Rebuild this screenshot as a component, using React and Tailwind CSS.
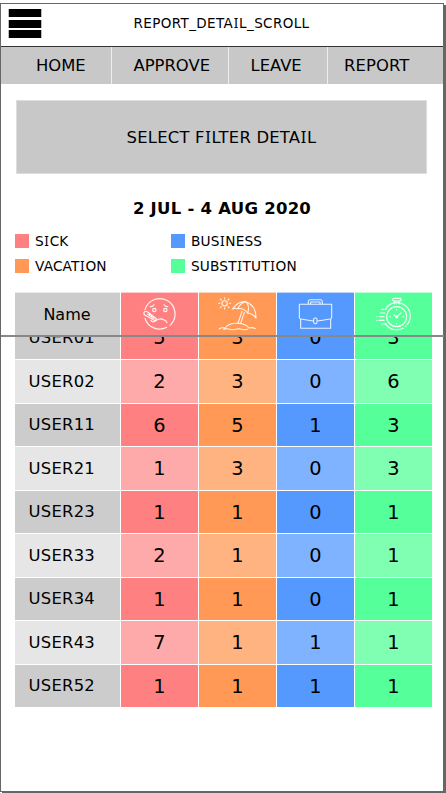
import React from "react";

function T({ children }) {
  return String(children).split(/(I)/).map((p, i) =>
    p === "I" ? <span key={i} className="px-[0.5px] font-['Noto_Sans',sans-serif] leading-none">I</span> : p
  );
}

function SickIcon() {
  return (
    <svg viewBox="18 24 234 129" className="block h-[43px] w-[78px]" fill="none" stroke="#fff" strokeOpacity=".9" strokeWidth="3.6" strokeLinecap="round" strokeLinejoin="round">
      <path d="M90 74A46 46 0 1 1 168 118M90 100A46 46 0 0 0 155 127" />
      <path d="M165 121l.5-.5" />
      <circle cx="118" cy="75" r="5" /><circle cx="151" cy="75" r="5" />
      <path d="M106 65q8 0 11-6M147 59q3 6 11 6" />
      <path d="M91 79q-7 4-3 10l30 17q6 1 6-5l-26-20q-4-3-7-2ZM98 88l18 12" />
      <path d="M105 86l-2 4M111 91l-2 4" />
      <path d="M108 106q4 7 12 3q12-12 26-5q8 3 10 9" />
    </svg>
  );
}

function VacationIcon() {
  return (
    <svg viewBox="12 24 234 129" className="block h-[43px] w-[78px]" fill="none" stroke="#fff" strokeOpacity=".9" strokeWidth="3.2" strokeLinecap="round" strokeLinejoin="round">
      <circle cx="89" cy="55" r="8" />
      <path d="M89 38v4M89 68v4M71 55h4M103 55h4M76 42l3 3M99 65l3 3M76 68l3-3M99 45l3-3" />
      <path d="M112 72Q128 49 152 50Q184 60 183 100Q174 85 158 84Q146 69 129 71Q120 68 112 72Z" />
      <path d="M152 50Q134 55 129 71M152 50Q165 62 158 84" />
      <path d="M141 79L129 114M148 82L137 115" />
      <path d="M73 132q6-6 17-3q9-12 29-14q31-2 43 14q11-3 19 2M86 133q9-4 18 0q9 2 18 0q9-4 18 0q9 2 18 0" />
    </svg>
  );
}

function BusinessIcon() {
  return (
    <svg viewBox="15 24 234 129" className="block h-[43px] w-[78px]" fill="none" stroke="#fff" strokeOpacity=".88" strokeWidth="3.2" strokeLinejoin="round">
      <path d="M109 58V50q0-6 6-6h30q6 0 6 6v8M116 58v-7h28v7" />
      <path d="M82 58h97v39q0 4-4 5l-39 6M82 58v39q0 4 4 5l38 6" />
      <path d="M86 102v28h90v-28" />
      <rect x="125" y="99" width="10" height="17" rx="4" />
    </svg>
  );
}

function SubstitutionIcon() {
  return (
    <svg viewBox="15 24 234 129" className="block h-[43px] w-[78px]" fill="none" stroke="#fff" strokeOpacity=".92" strokeWidth="3.6" strokeLinecap="round" strokeLinejoin="round">
      <rect x="128" y="40" width="25" height="8" rx="3" />
      <path d="M134 48v8M147 48v8" />
      <path d="M106 73A40 40 0 1 1 171 119M106 116A40 40 0 0 0 159 130M167 124l.5-.5" />
      <circle cx="140" cy="95" r="30" />
      <path d="M140 73v2M140 115v2M119 95h2M159 95h2M132 90l8 6l13-12" />
      <path d="M95 73h13M91 84h13M89 95h13M87 106h15M95 117h13M81 95h.5M80 106h.5" />
      <circle cx="140" cy="96" r="2.5" />
    </svg>
  );
}

const tableGrid = "grid grid-cols-[105px_77px_77px_77px_77px] gap-x-px";

const dark = ["bg-[#cccccc]", "bg-[#ff8080]", "bg-[#ff9955]", "bg-[#5599ff]", "bg-[#55ff99]"];
const light = ["bg-[#e6e6e6]", "bg-[#ffaaaa]", "bg-[#ffb380]", "bg-[#80b3ff]", "bg-[#80ffb3]"];

const rows = [
  ["USER02", 2, 3, 0, 6],
  ["USER11", 6, 5, 1, 3],
  ["USER21", 1, 3, 0, 3],
  ["USER23", 1, 1, 0, 1],
  ["USER33", 2, 1, 0, 1],
  ["USER34", 1, 1, 0, 1],
  ["USER43", 7, 1, 1, 1],
  ["USER52", 1, 1, 1, 1],
];

function Row({ values, tones, height }) {
  return (
    <div className={tableGrid + " shrink-0 " + height}>
      {values.map((v, i) => (
        <div key={i} className={"flex items-center pt-px " + tones[i] + (i === 0 ? " pl-[13.5px] text-[16.4px] tracking-[0.25px]" : " justify-center text-[19.4px]")}>
          {v}
        </div>
      ))}
    </div>
  );
}

function Legend({ color, label }) {
  return (
    <div className="flex h-[25px] items-center gap-[6px] text-[13.7px] tracking-[0.15px]">
      <span className={"h-[14px] w-[14px] " + color} />
      <span className="pt-[2px] leading-none"><T>{label}</T></span>
    </div>
  );
}

export default function App() {
  return (
    <div className="h-[793px] w-[446px] overflow-hidden bg-white pt-[3px] font-['DejaVu_Sans',Verdana,sans-serif] text-black">
      <div className="flex h-[789px] w-[444px] flex-col border border-[#666666] bg-white shadow-[2px_2px_0_0_#666666]">
        <header className="relative flex h-[43px] shrink-0 items-center justify-center border-b border-[#333333] text-[13.5px] tracking-[0.38px]">
          <div className="absolute left-[7px] top-[5px] flex flex-col gap-[2.5px]">
            <span className="h-[8px] w-[34px] border-x border-[#bbb] bg-black" />
            <span className="h-[8px] w-[34px] border-x border-[#bbb] bg-black" />
            <span className="h-[8px] w-[34px] border-x border-[#bbb] bg-black" />
          </div>
          <span className="-mt-[3px] pr-px"><T>REPORT_DETAIL_SCROLL</T></span>
        </header>
        <nav className="grid h-[37px] shrink-0 grid-cols-[110px_116px_98px_115px] gap-x-px bg-[#eeeeee] text-[16.4px]">
          <span className="flex items-center bg-[#c8c8c8] pl-[35px] pt-px">HOME</span>
          <span className="flex items-center bg-[#c8c8c8] pl-[21.5px] pt-px">APPROVE</span>
          <span className="flex items-center bg-[#c8c8c8] pl-[21.5px] pt-px">LEAVE</span>
          <span className="flex items-center bg-[#c8c8c8] pl-[16px] pt-px tracking-[0.1px]">REPORT</span>
        </nav>
        <div className="ml-[15px] mt-[16px] flex h-[74px] w-[411px] shrink-0 items-center justify-center border border-[#dddddd] bg-[#c8c8c8] pt-[2px] text-[16.4px] tracking-[0.22px]">
          <span><T>SELECT FILTER DETAIL</T></span>
        </div>
        <h1 className="mt-[23px] h-[24px] shrink-0 text-center text-[16.5px] font-bold leading-[24px] tracking-[0.25px]">2 JUL - 4 AUG 2020</h1>
        <div className="ml-[14px] mt-[7px] grid shrink-0 grid-cols-[156px_200px]">
          <Legend color="bg-[#ff8080]" label="SICK" />
          <Legend color="bg-[#5599ff]" label="BUSINESS" />
          <Legend color="bg-[#ff9955]" label="VACATION" />
          <Legend color="bg-[#55ff99]" label="SUBSTITUTION" />
        </div>
        <div className={tableGrid + " ml-[14px] mt-[14px] h-[43px] shrink-0 [&>div]:border-t [&>div]:border-white/60"}>
          <div className="flex items-center justify-center bg-[#cccccc] pr-px text-[16px]">Name</div>
          <div className="bg-[#ff8080]"><SickIcon /></div>
          <div className="bg-[#ff9955]"><VacationIcon /></div>
          <div className="bg-[#5599ff]"><BusinessIcon /></div>
          <div className="bg-[#55ff99]"><SubstitutionIcon /></div>
        </div>
        <div className="relative flex h-[24px] w-[443px] shrink-0 flex-col justify-end overflow-hidden border-t-2 border-[#888888] pl-[14px]">
          <Row values={["USER01", 5, 3, 0, 3]} tones={dark} height="h-[43px]" />
        </div>
        <div className="ml-[14px] mt-px flex shrink-0 flex-col gap-px">
          {rows.map((r, i) => (
            <Row key={r[0]} values={r} tones={i % 2 ? dark : light} height={i % 2 ? "h-[42px]" : "h-[43px]"} />
          ))}
        </div>
      </div>
    </div>
  );
}
